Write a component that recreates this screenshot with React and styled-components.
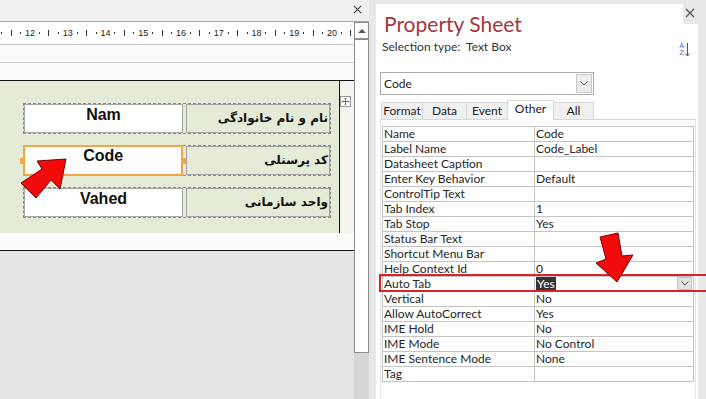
import React from "react";
import styled, { createGlobalStyle } from "styled-components";

const GlobalStyle = createGlobalStyle`
  html, body {
    margin: 0;
    padding: 0;
    overflow: hidden;
    background: #e8e8e8;
  }
`;

const fields = [
  { value: "Nam", label: "نام و نام خانوادگی" },
  { value: "Code", label: "کد پرسنلی", selected: true },
  { value: "Vahed", label: "واحد سازمانی" },
];

const props = [
  ["Name", "Code"],
  ["Label Name", "Code_Label"],
  ["Datasheet Caption", ""],
  ["Enter Key Behavior", "Default"],
  ["ControlTip Text", ""],
  ["Tab Index", "1"],
  ["Tab Stop", "Yes"],
  ["Status Bar Text", ""],
  ["Shortcut Menu Bar", ""],
  ["Help Context Id", "0"],
  ["Auto Tab", "Yes", true],
  ["Vertical", "No"],
  ["Allow AutoCorrect", "Yes"],
  ["IME Hold", "No"],
  ["IME Mode", "No Control"],
  ["IME Sentence Mode", "None"],
  ["Tag", ""],
];

const tabs = [
  { name: "Format", w: 42 },
  { name: "Data", w: 45 },
  { name: "Event", w: 42 },
  { name: "Other", w: 47, active: true },
  { name: "All", w: 41 },
];

const Screen = styled.div`
  position: relative;
  display: flex;
  width: 706px;
  height: 399px;
  overflow: hidden;
  background: #e8e8e8;
  font-family: Lato, "Noto Sans", sans-serif;
`;

/* ---------- left: form design view ---------- */

const LeftPane = styled.div`
  width: 369px;
  display: flex;
  flex-direction: column;
`;

const TopBar = styled.div`
  height: 16px;
  background: #f0f0f0;
  border-bottom: 1px solid #a8a8a8;
  display: flex;
  justify-content: flex-end;
  align-items: flex-start;
  padding: 5px 7px 0 0;
`;

const DesignBody = styled.div`
  flex: 1;
  display: flex;
`;

const Design = styled.div`
  width: 354px;
  display: flex;
  flex-direction: column;
  background: #e4e4e4;
`;

const Ruler = styled.div`
  height: 22px;
  background: #fff;
  border-bottom: 1px solid #c6c6c6;
  display: flex;
  align-items: center;
  overflow: hidden;
`;

const RulerTrack = styled.div`
  display: flex;
  align-items: center;
  margin-left: -12.5px;
`;

const RulerCell = styled.div`
  flex: none;
  width: 9.45px;
  display: flex;
  justify-content: center;
  align-items: center;
  font-family: "Liberation Sans", Arial, sans-serif;
  font-size: 9px;
  color: #222;
  height: 10px;
`;

const Tick = styled.span`
  display: block;
  width: 1px;
  height: ${(p) => (p.$long ? "6px" : "2px")};
  background: #333;
`;

const Band = styled.div`
  height: 17px;
  background: #fbfbfb;
  border-bottom: 1px solid ${(p) => (p.$dark ? "#111" : "#cdcdcd")};
`;

const FormSection = styled.div`
  height: 152px;
  display: flex;
`;

const FormArea = styled.div`
  width: 340px;
  background: #e4ebd7;
  border-right: 1px solid #111;
  display: flex;
  flex-direction: column;
  gap: 11px;
  padding: 22px 0 0 23px;
  box-sizing: border-box;
`;

const FormMargin = styled.div`
  flex: 1;
  background: #f3f4ef;
  padding-top: 10px;
`;

const FieldGroup = styled.div`
  width: 308px;
  height: 31px;
  box-sizing: border-box;
  border: 1px dashed #8a8a8a;
  display: flex;
  gap: 3px;
`;

const TextBox = styled.div`
  position: relative;
  box-sizing: border-box;
  background: #fff;
  border: ${(p) => (p.$selected ? "2px solid #f4a646" : "1px solid #a7a7a7")};
  margin: ${(p) => (p.$selected ? "-1px 0 -1px -1px" : "0")};
  width: ${(p) => (p.$selected ? "161px" : "159px")};
  text-align: center;
  font-family: "Liberation Sans", Arial, sans-serif;
  font-weight: bold;
  font-size: 16px;
  line-height: 18px;
  padding-top: ${(p) => (p.$selected ? "0px" : "1px")};
  color: #111;
`;

const Handle = styled.span`
  position: absolute;
  top: 50%;
  ${(p) => (p.$right ? "right: -5px;" : "left: -5px;")}
  width: 3px;
  height: 6px;
  margin-top: -3px;
  background: #f4a646;
`;

const FieldLabel = styled.div`
  width: 144px;
  box-sizing: border-box;
  background: #e4ebd7;
  border: 1px solid #a2a2a2;
  direction: rtl;
  display: flex;
  align-items: center;
  padding: 0 1px 1px 0;
  font-family: "DejaVu Sans", sans-serif;
  font-weight: bold;
  font-size: 12px;
  color: #111;
`;

const GrayFill = styled.div`
  flex: 1;
  background: #e4e4e4;
`;

const ScrollColumn = styled.div`
  width: 15px;
  display: flex;
  flex-direction: column;
  background: #d5d5d5;
`;

const ScrollTrack = styled.div`
  height: 331px;
  box-sizing: border-box;
  background: #fff;
  border: 1px solid #8c8c8c;
`;

const ScrollUp = styled.div`
  height: 15px;
  border-bottom: 2px solid #8c8c8c;
  display: flex;
  justify-content: center;
  align-items: center;
  &::before {
    content: "";
    border-left: 4px solid transparent;
    border-right: 4px solid transparent;
    border-bottom: 4px solid #555;
  }
`;

/* ---------- right: property sheet ---------- */

const RightPane = styled.div`
  position: relative;
  flex: 1;
  padding: 4px 8px 0 7px;
  display: flex;
`;

const CloseBox = styled.div`
  position: absolute;
  top: 0;
  right: 0;
  width: 23px;
  height: 24px;
  background: #e8e8e8;
  display: flex;
  align-items: flex-start;
  padding: 8px 0 0 2px;
  box-sizing: border-box;
`;

const Panel = styled.div`
  flex: 1;
  background: #fff;
  padding: 7px 0 0 4px;
  display: flex;
  flex-direction: column;
`;

const Title = styled.div`
  font-size: 21px;
  line-height: 26px;
  color: #a4373a;
  margin-left: 4px;
`;

const SelectionRow = styled.div`
  display: flex;
  justify-content: space-between;
  align-items: flex-start;
  height: 20px;
  margin-top: 1.5px;
  padding: 0 8px 0 2px;
`;

const SelectionText = styled.span`
  font-size: 12px;
  line-height: 15px;
  color: #333;
  white-space: pre;
`;

const SortIcon = styled.div`
  display: flex;
  align-items: center;
  gap: 1px;
  margin-top: 4px;
`;

const SortLetters = styled.div`
  display: flex;
  flex-direction: column;
  font-family: "DejaVu Sans", sans-serif;
  font-size: 7px;
  line-height: 7px;
  text-align: center;
`;

const Letter = styled.span`
  color: ${(p) => p.$color};
`;

const Combo = styled.div`
  margin-top: 13px;
  width: 214px;
  height: 23px;
  box-sizing: border-box;
  border: 1px solid #ababab;
  display: flex;
  align-items: center;
  justify-content: space-between;
  padding-left: 3px;
  font-size: 12px;
  color: #222;
`;

const ComboButton = styled.div`
  width: 16px;
  height: 19px;
  margin-right: 1px;
  box-sizing: border-box;
  background: #ececec;
  border: 1px solid #c9c9c9;
  display: flex;
  align-items: center;
  justify-content: center;
`;

const TabRow = styled.div`
  display: flex;
  align-items: flex-end;
  margin: 5px 0 0 1px;
  height: 19px;
`;

const Tab = styled.div`
  width: ${(p) => p.$w}px;
  height: ${(p) => (p.$active ? "20px" : "17px")};
  box-sizing: border-box;
  margin-right: -1px;
  margin-bottom: ${(p) => (p.$active ? "-1px" : "0")};
  position: relative;
  z-index: ${(p) => (p.$active ? 2 : 1)};
  background: ${(p) => (p.$active ? "#fff" : "#f0f0f0")};
  border: 1px solid #d8d8d8;
  border-bottom: none;
  font-size: 12px;
  line-height: ${(p) => (p.$active ? "15px" : "16px")};
  text-align: center;
  color: #222;
`;

const TabPage = styled.div`
  width: 316px;
  box-sizing: border-box;
  border-top: 1px solid #d6d6d6;
  border-left: 1px solid #e4e4e4;
  border-right: 1px solid #e4e4e4;
  padding: 6px 0 0 1px;
  flex: 1;
`;

const PropGrid = styled.div`
  width: 312px;
  box-sizing: border-box;
  border: 1px solid #c4c4c4;
  border-bottom: none;
`;

const PropRow = styled.div`
  display: grid;
  grid-template-columns: 152px 1fr;
  height: 15px;
  box-sizing: border-box;
  border-bottom: 1px solid #c4c4c4;
  font-size: 12px;
  line-height: 14px;
  color: #262626;
`;

const PropName = styled.div`
  border-right: 1px solid #c4c4c4;
  padding-left: 1px;
  white-space: nowrap;
  overflow: hidden;
`;

const PropValue = styled.div`
  display: flex;
  justify-content: space-between;
  align-items: center;
  padding-left: 1px;
  white-space: nowrap;
`;

const Picked = styled.span`
  background: #333;
  color: #fff;
  line-height: 13px;
  padding: 0 1px;
`;

const MiniButton = styled.div`
  width: 15px;
  height: 13px;
  margin-right: 1px;
  box-sizing: border-box;
  background: #e2e2e2;
  border: 1px solid #c4c4c4;
  display: flex;
  align-items: center;
  justify-content: center;
`;

const Overlay = styled.svg`
  position: absolute;
  left: 0;
  top: 0;
  pointer-events: none;
`;

const CloseX = ({ size = 9, color = "#444" }) => (
  <svg width={size} height={size} viewBox="0 0 10 10">
    <path d="M1 1 L9 9 M9 1 L1 9" stroke={color} strokeWidth="1.3" />
  </svg>
);

const Chevron = () => (
  <svg width="8" height="5" viewBox="0 0 8 5">
    <path d="M0.5 0.5 L4 4 L7.5 0.5" fill="none" stroke="#555" strokeWidth="1" />
  </svg>
);

const MoveHandle = () => (
  <svg width="11" height="11" viewBox="0 0 11 11">
    <rect x="0.5" y="0.5" width="10" height="10" fill="#fff" stroke="#9a9a9a" />
    <path d="M5.5 2 V9 M2 5.5 H9" stroke="#777" strokeWidth="1" />
    <path d="M4.5 3 L5.5 2 L6.5 3 M4.5 8 L5.5 9 L6.5 8 M3 4.5 L2 5.5 L3 6.5 M8 4.5 L9 5.5 L8 6.5" fill="none" stroke="#777" strokeWidth="0.8" />
  </svg>
);

// ruler: cell before 12 is only a spacer, then each centimetre is "n · | ·"
const rulerCells = [<RulerCell key="start" />];
for (let n = 11; n <= 20; n++) {
  if (n > 11) rulerCells.push(<RulerCell key={n}>{n}</RulerCell>);
  rulerCells.push(<RulerCell key={n + "a"}><Tick /></RulerCell>);
  rulerCells.push(<RulerCell key={n + "b"}><Tick $long /></RulerCell>);
  if (n < 20) rulerCells.push(<RulerCell key={n + "c"}><Tick /></RulerCell>);
}

const App = () => {
  return (
    <Screen>
      <GlobalStyle />
      <LeftPane>
        <TopBar>
          <CloseX />
        </TopBar>
        <DesignBody>
          <Design>
            <Ruler>
              <RulerTrack>{rulerCells}</RulerTrack>
            </Ruler>
            <Band />
            <Band $dark />
            <FormSection>
              <FormArea>
                {fields.map((f) => (
                  <FieldGroup key={f.value}>
                    <TextBox $selected={f.selected}>
                      {f.value}
                      {f.selected && (
                        <>
                          <Handle />
                          <Handle $right />
                        </>
                      )}
                    </TextBox>
                    <FieldLabel>{f.label}</FieldLabel>
                  </FieldGroup>
                ))}
              </FormArea>
              <FormMargin>
                <MoveHandle />
              </FormMargin>
            </FormSection>
            <Band $dark />
            <GrayFill />
          </Design>
          <ScrollColumn>
            <ScrollTrack>
              <ScrollUp />
            </ScrollTrack>
          </ScrollColumn>
        </DesignBody>
      </LeftPane>

      <RightPane>
        <Panel>
          <Title>Property Sheet</Title>
          <SelectionRow>
            <SelectionText>{"Selection type:  Text Box"}</SelectionText>
            <SortIcon>
              <SortLetters>
                <Letter $color="#3c78c0">A</Letter>
                <Letter $color="#8a5aa8">Z</Letter>
              </SortLetters>
              <svg width="5" height="14" viewBox="0 0 5 14">
                <path d="M2.5 0 V13 M0.3 10.5 L2.5 13 L4.7 10.5" fill="none" stroke="#555" strokeWidth="1" />
              </svg>
            </SortIcon>
          </SelectionRow>
          <Combo>
            Code
            <ComboButton>
              <Chevron />
            </ComboButton>
          </Combo>
          <TabRow>
            {tabs.map((t) => (
              <Tab key={t.name} $w={t.w} $active={t.active}>
                {t.name}
              </Tab>
            ))}
          </TabRow>
          <TabPage>
            <PropGrid>
              {props.map(([name, value, picked]) => (
                <PropRow key={name}>
                  <PropName>{name}</PropName>
                  <PropValue>
                    {picked ? <Picked>{value}</Picked> : value}
                    {picked && (
                      <MiniButton>
                        <Chevron />
                      </MiniButton>
                    )}
                  </PropValue>
                </PropRow>
              ))}
            </PropGrid>
          </TabPage>
        </Panel>
        <CloseBox>
          <CloseX size={10} color="#555" />
        </CloseBox>
      </RightPane>

      <Overlay width="706" height="399" viewBox="0 0 706 399">
        <rect x="380" y="275" width="330" height="16" fill="none" stroke="#d8232a" strokeWidth="2" />
        <polygon
          points="66,159 60,189 51,180 36,198 21,183 42,169 37,161"
          fill="#f10b0b"
          stroke="#7a0000"
          strokeWidth="1"
        />
        <polygon
          points="600,237 618,233 622,256 633,255 617,282 596,263 606,259"
          fill="#f10b0b"
          stroke="#7a0000"
          strokeWidth="1"
        />
      </Overlay>
    </Screen>
  );
};

export default App;
